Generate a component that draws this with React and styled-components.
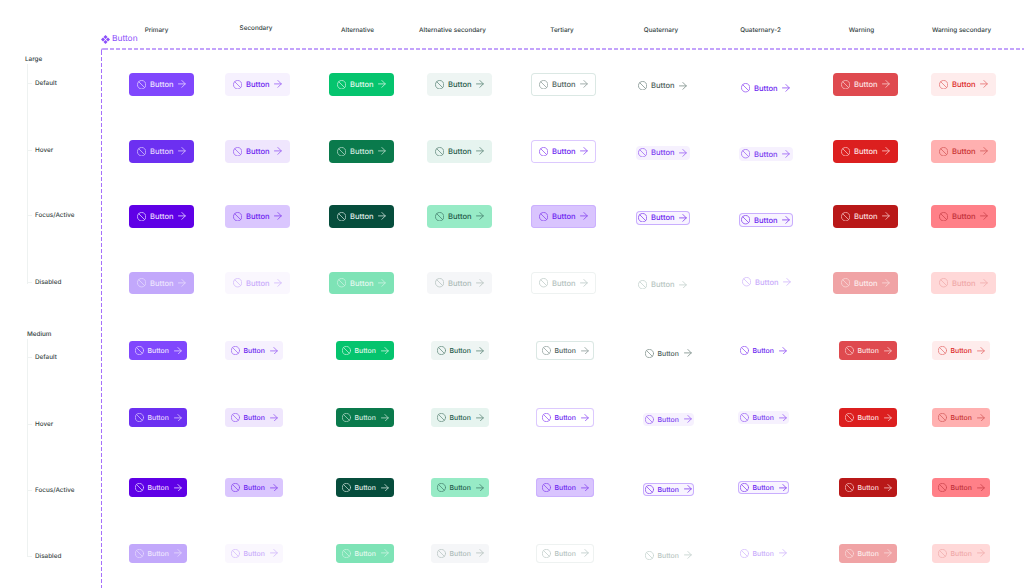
import React from 'react'
import styled, { createGlobalStyle } from 'styled-components'
import { ArrowRight, Ban } from 'lucide-react'

const GlobalStyle = createGlobalStyle`
    html, body {
        margin: 0;
        padding: 0;
        background: #fff;
    }
    body {
        font-family: Inter, "Liberation Sans", sans-serif;
        text-rendering: geometricPrecision;
        overflow: hidden;
    }
`

const Page = styled.div`
    display: flex;
    width: 1024px;
    height: 588px;
    overflow: hidden;
`

const Sidebar = styled.div`
    flex: 0 0 101px;
    padding-top: 54px;
    box-sizing: border-box;
`

const GroupTitle = styled.div`
    height: 10px;
    line-height: 10px;
    margin-left: ${(p) => p.$indent}px;
    margin-top: ${(p) => p.$top || 0}px;
    font-size: 6.35px;
    font-weight: 500;
    color: #2f3d3d;
`

const Tree = styled.div`
    display: flex;
    flex-direction: column;
    margin-left: 26.5px;
    border-left: 1.5px solid #eef2f1;
    padding-left: 7.5px;
    height: ${(p) => p.$height}px;
`

const TreeItem = styled.div`
    position: relative;
    height: 10px;
    line-height: 10px;
    margin-top: ${(p) => p.$gap}px;
    font-size: 6.35px;
    font-weight: 500;
    color: #3a4746;

    &::before {
        content: '';
        position: absolute;
        left: -7.5px;
        top: 5px;
        width: 4px;
        height: 1px;
        background: #eef2f1;
    }
`

const Main = styled.div`
    flex: 1;
    display: flex;
    flex-direction: column;
    min-width: 0;
`

const Titles = styled.div`
    display: grid;
    grid-template-columns: 5.5px 100px 99px 104px 86px 133px 65px 134px 68px 132px;
    height: 36px;
    padding-top: 25px;
    box-sizing: border-box;
`

const Title = styled.div`
    grid-column: ${(p) => p.$col};
    height: 11px;
    line-height: 11px;
    margin-top: ${(p) => p.$lift || 0}px;
    text-align: center;
    white-space: nowrap;
    font-size: 6.35px;
    font-weight: 500;
    color: #2f3d3d;
`

const SetLabel = styled.div`
    display: flex;
    align-items: center;
    gap: 2px;
    height: 10px;
    margin-top: -2px;
    margin-bottom: 4px;
    font-size: 8.4px;
    color: #8a4dfb;
`

const Frame = styled.div`
    position: relative;
    flex: 1;
    width: 940px;
    box-sizing: border-box;
    padding: 2px 0 0 28px;
    background-image:
        repeating-linear-gradient(to right, #c3a3fb 0, #c3a3fb 4px, transparent 4px, transparent 6px),
        repeating-linear-gradient(to bottom, #a56ffb 0, #a56ffb 4px, transparent 4px, transparent 6px);
    background-size: 100% 2px, 1px 100%;
    background-position: 3px 0, 0 3px;
    background-repeat: no-repeat;

    &::before {
        content: '';
        position: absolute;
        left: 0;
        top: 0;
        width: 3px;
        height: 3px;
        box-sizing: border-box;
        border-left: 1px solid #a56ffb;
        border-top: 2px solid #c3a3fb;
        border-top-left-radius: 2px;
    }
`

const StateGrid = styled.div`
    display: grid;
    grid-template-columns: ${(p) => p.$columns};
    grid-template-rows: ${(p) => p.$rows};
    align-items: center;
    justify-items: start;
`

const ButtonBox = styled.div`
    display: flex;
    align-items: center;
    box-sizing: border-box;
    width: ${(p) => p.$width}px;
    height: ${(p) => p.$height}px;
    margin-top: ${(p) => p.$dy || 0}px;
    margin-left: ${(p) => p.$dx || 0}px;
    padding-left: ${(p) => p.$pad}px;
    border-radius: ${(p) => p.$radius}px;
    box-shadow: ${(p) => (p.$line ? `inset 0 0 0 1px ${p.$line}` : 'none')};
    background: ${(p) => p.$bg || 'transparent'};
    color: ${(p) => p.$fg};
    font-size: ${(p) => p.$font}px;
    font-weight: 500;
    white-space: nowrap;
`

const BanIcon = styled(Ban)`
    flex: none;
    width: ${(p) => p.$size}px;
    height: ${(p) => p.$size}px;
    color: ${(p) => p.$tone};
`

const ArrowIcon = styled(ArrowRight)`
    flex: none;
    width: 7.8px;
    height: 7.8px;
    color: ${(p) => p.$tone};
`

const Label = styled.span`
    margin: 0 ${(p) => p.$after}px 0 ${(p) => p.$before}px;
`

// [background, text, icons, border] for Default, Hover, Focus/Active, Disabled
const VARIANTS = {
    primary: [
        ['#8047fd', '#efe6ff', '#d9c4ff'],
        ['#6c30f1', '#e6d8ff', '#cdb4fb'],
        ['#5f00e6', '#eadcff', '#d6bfff'],
        ['#c2a8fb', '#eee6fe', '#e2d4fd'],
    ],
    secondary: [
        ['#f6f1fe', '#6a1df0', '#a673f5'],
        ['#efe6fd', '#6a1df0', '#a16cf4'],
        ['#dac6fe', '#6a1df0', '#8f52f0'],
        ['#faf7fe', '#c9acfb', '#d6bffc'],
    ],
    alternative: [
        ['#05c46e', '#e3f9ee', '#b4edd2'],
        ['#0a7a4c', '#d5ebe0', '#a6d0bd'],
        ['#064d3c', '#e3efeb', '#b5cfc7'],
        ['#7ee3b6', '#e5f9f0', '#c2f1dc'],
    ],
    altSecondary: [
        ['#eef5f3', '#1f5a4a', '#6f9488'],
        ['#e6f4ef', '#1f5a4a', '#6f9488'],
        ['#97ebc6', '#1f5a4a', '#4f8c78'],
        ['#f5f6f8', '#aebcb8', '#bcc8c5'],
    ],
    tertiary: [
        ['#fff', '#4f6360', '#9aa8a5', '#dbe8e4'],
        ['#fff', '#6a1df0', '#9d63f5', '#dcc9fe'],
        ['#d9c4fe', '#6a1df0', '#8f52f0', '#cbb0fe'],
        ['#fff', '#b4c2be', '#c5d1ce', '#eef2f1'],
    ],
    quaternary: [
        [null, '#4c5d5a', '#8a9a96'],
        ['#f6f1fe', '#7a3cf0', '#a673f5'],
        ['#f8f4ff', '#6a1df0', '#8f52f0', '#c9aefe'],
        [null, '#b8c6c2', '#c9d6d2'],
    ],
    quaternary2: [
        [null, '#6a1df0', '#9d63f5'],
        ['#f6f1fe', '#7a3cf0', '#a673f5'],
        ['#f8f4ff', '#6a1df0', '#8f52f0', '#c9aefe'],
        [null, '#c9acfb', '#d6bffc'],
    ],
    warning: [
        ['#df4a4f', '#fde3e3', '#f6bcbc'],
        ['#dc1f1f', '#fde3e3', '#f6b4b4'],
        ['#b91818', '#fbdcdc', '#f0adad'],
        ['#f0a3a5', '#fcecec', '#f8d4d4'],
    ],
    warningSecondary: [
        ['#feecec', '#dc2626', '#e87c7c'],
        ['#ffb0b0', '#c93030', '#d96464'],
        ['#ff8088', '#c0303a', '#d04a52'],
        ['#ffd8d8', '#f0a8a8', '#f2b0b0'],
    ],
}

const ORDER = [
    'primary',
    'secondary',
    'alternative',
    'altSecondary',
    'tertiary',
    'quaternary',
    'quaternary2',
    'warning',
    'warningSecondary',
]

const TITLES = [
    'Primary',
    'Secondary',
    'Alternative',
    'Alternative secondary',
    'Tertiary',
    'Quaternary',
    'Quaternary-2',
    'Warning',
    'Warning secondary',
]

const LARGE = {
    width: 64.8,
    height: 22.5,
    pad: 8,
    radius: 3.8,
    font: 7.6,
    icon: 9.4,
    before: 3.6,
    after: 4.8,
    columns: '96px 104px 98px 104px 105px 103px 94px 98px 100px',
    rows: '68.5px 65.5px 64.5px 69px',
    thin: { width: 53.5, height: 13.5, pad: 2, radius: 4 },
    // quaternary rows sit a little off the grid line in the source file
    offsets: {
        quaternary: [[3, 0], [3, 0], [3, 0], [3, 0]],
        quaternary2: [[7.5, 0], [5.5, 0], [7.5, 0], [-2, 1]],
    },
}

const MEDIUM = {
    width: 58,
    height: 19,
    pad: 6,
    radius: 3.4,
    font: 6.9,
    icon: 9,
    before: 3.5,
    after: 4.8,
    columns: '96px 111px 95px 105px 107px 95px 101px 93px 100px',
    rows: '66px 68px 72px 59px',
    thin: { width: 50.5, height: 13, pad: 2, radius: 4 },
    offsets: {
        quaternary: [[5, 0], [3, 0], [3.5, 0], [4, 0]],
        quaternary2: [[0, 0], [0, 0], [0, 0], [0, 0]],
    },
}

function VariantButton({ size, name, state }) {
    const [bg, fg, tone, line] = VARIANTS[name][state]
    const isThin = name === 'quaternary' || name === 'quaternary2'
    const box = isThin ? size.thin : size
    const [dy, dx] = isThin ? size.offsets[name][state] : [0, 0]

    return (
        <ButtonBox
            $width={box.width}
            $height={box.height}
            $pad={box.pad}
            $radius={box.radius}
            $font={size.font}
            $bg={bg}
            $fg={fg}
            $line={line}
            $dy={dy}
            $dx={dx}
        >
            <BanIcon $size={size.icon} $tone={tone} viewBox="1 1 22 22" strokeWidth={2} />
            <Label $before={size.before} $after={size.after}>
                Button
            </Label>
            <ArrowIcon $tone={tone} viewBox="4 4 16 16" strokeWidth={1.9} />
        </ButtonBox>
    )
}

function SizeGrid({ size }) {
    return (
        <StateGrid $columns={size.columns} $rows={size.rows}>
            {[0, 1, 2, 3].map((state) =>
                ORDER.map((name) => (
                    <VariantButton key={`${name}-${state}`} size={size} name={name} state={state} />
                ))
            )}
        </StateGrid>
    )
}

function SetGlyph() {
    return (
        <svg width="9" height="9" viewBox="0 0 9 9" fill="#8a4dfb">
            <path d="M4.5 0 6.5 2 4.5 4 2.5 2Z" />
            <path d="M4.5 5 6.5 7 4.5 9 2.5 7Z" />
            <path d="M2 2.5 4 4.5 2 6.5 0 4.5Z" />
            <path d="M7 2.5 9 4.5 7 6.5 5 4.5Z" />
        </svg>
    )
}

export default function App() {
    return (
        <Page>
            <GlobalStyle />
            <Sidebar>
                <GroupTitle $indent={25}>Large</GroupTitle>
                <Tree $height={220}>
                    <TreeItem $gap={14}>Default</TreeItem>
                    <TreeItem $gap={57}>Hover</TreeItem>
                    <TreeItem $gap={55}>Focus/Active</TreeItem>
                    <TreeItem $gap={56.5}>Disabled</TreeItem>
                </Tree>
                <GroupTitle $indent={27} $top={44.5}>
                    Medium
                </GroupTitle>
                <Tree $height={218}>
                    <TreeItem $gap={13.5}>Default</TreeItem>
                    <TreeItem $gap={57}>Hover</TreeItem>
                    <TreeItem $gap={55.5}>Focus/Active</TreeItem>
                    <TreeItem $gap={56.5}>Disabled</TreeItem>
                </Tree>
            </Sidebar>
            <Main>
                <Titles>
                    {TITLES.map((title, i) => (
                        <Title key={title} $col={i + 2} $lift={title === 'Secondary' ? -2 : 0}>
                            {title}
                        </Title>
                    ))}
                </Titles>
                <SetLabel>
                    <SetGlyph />
                    Button
                </SetLabel>
                <Frame>
                    <SizeGrid size={LARGE} />
                    <SizeGrid size={MEDIUM} />
                </Frame>
            </Main>
        </Page>
    )
}
